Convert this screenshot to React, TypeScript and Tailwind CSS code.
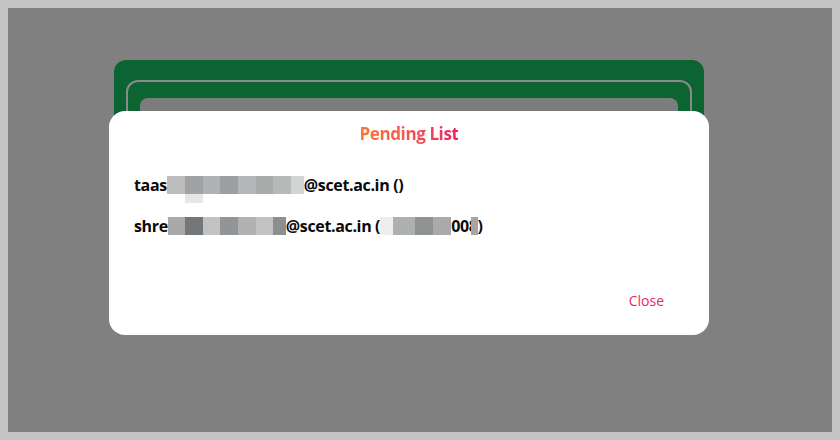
import React from 'react'

type Block = { w: number; c: string }

const row1: Block[] = [
  { w: 18, c: '#bdbdbd' },
  { w: 18, c: '#a0a3a5' },
  { w: 17, c: '#b0b1b2' },
  { w: 18, c: '#9c9e9f' },
  { w: 18, c: '#b5b6b7' },
  { w: 17, c: '#a9abab' },
  { w: 18, c: '#b7b8b9' },
  { w: 13, c: '#d3d4d4' },
]

const row2: Block[] = [
  { w: 17, c: '#a9a9a9' },
  { w: 18, c: '#74777a' },
  { w: 17, c: '#c2c2c2' },
  { w: 18, c: '#929597' },
  { w: 18, c: '#b0b1b2' },
  { w: 17, c: '#c1c2c3' },
  { w: 13, c: '#8c8f90' },
]

const row2b: Block[] = [
  { w: 13, c: '#eeeeee' },
  { w: 22, c: '#adb0b1' },
  { w: 18, c: '#8f9293' },
  { w: 18, c: '#a8aaab' },
]

function Pixels({ blocks }: { blocks: Block[] }) {
  return (
    <span className="inline-flex align-middle h-[18px]">
      {blocks.map((b, i) => (
        <span key={i} className="h-full" style={{ width: b.w, background: b.c }} />
      ))}
    </span>
  )
}

export default function App() {
  return (
    <div className="w-[840px] h-[440px] bg-[#c4c4c4] p-2 font-['Open_Sans',sans-serif]">
      <div className="relative w-full h-full bg-[#808080] overflow-hidden">
        {/* page behind the overlay */}
        <div className="ml-[106px] mt-[52px] w-[590px] h-[240px] rounded-xl bg-[#0c6433] p-3 pt-5">
          <div className="h-full rounded-xl border-2 border-[#8a8a8a] px-3 pt-4">
            <div className="h-full rounded-lg bg-[#7b7c7c]" />
          </div>
        </div>

        {/* modal */}
        <div className="absolute left-[101px] top-[103px] w-[600px] h-[224px] rounded-2xl bg-white flex flex-col">
          <h2 className="mt-[11px] text-center text-[17px] font-bold tracking-[-0.4px] leading-[24px]">
            <span className="bg-gradient-to-r from-[#f8772f] to-[#ef1a62] bg-clip-text text-transparent">
              Pending List
            </span>
          </h2>
          <div className="mt-[27px] pl-[25px] flex flex-col gap-[17px] text-[16px] font-bold tracking-[-0.35px] text-[#0a0a0a] leading-[24px]">
            <div className="flex items-center">
              <span>taas</span>
              <span className="relative inline-flex">
                <Pixels blocks={row1} />
                <span className="absolute left-[18px] top-[18px] w-[18px] h-[9px] bg-[#e6e6e6]" />
              </span>
              <span>@scet.ac.in ()</span>
            </div>
            <div className="flex items-center">
              <span>shre</span>
              <Pixels blocks={row2} />
              <span>@scet.ac.in (</span>
              <Pixels blocks={row2b} />
              <span className="relative">
                008
                <span className="absolute right-0 top-[3px] w-[7px] h-[18px] bg-[#a6a6a6]" />
              </span>
              <span>)</span>
            </div>
          </div>
          <div className="mt-auto mb-[24px] pr-[45px] flex justify-end">
            <button className="text-[14px] text-[#ec1f63] leading-[20px]">Close</button>
          </div>
        </div>
      </div>
    </div>
  )
}
